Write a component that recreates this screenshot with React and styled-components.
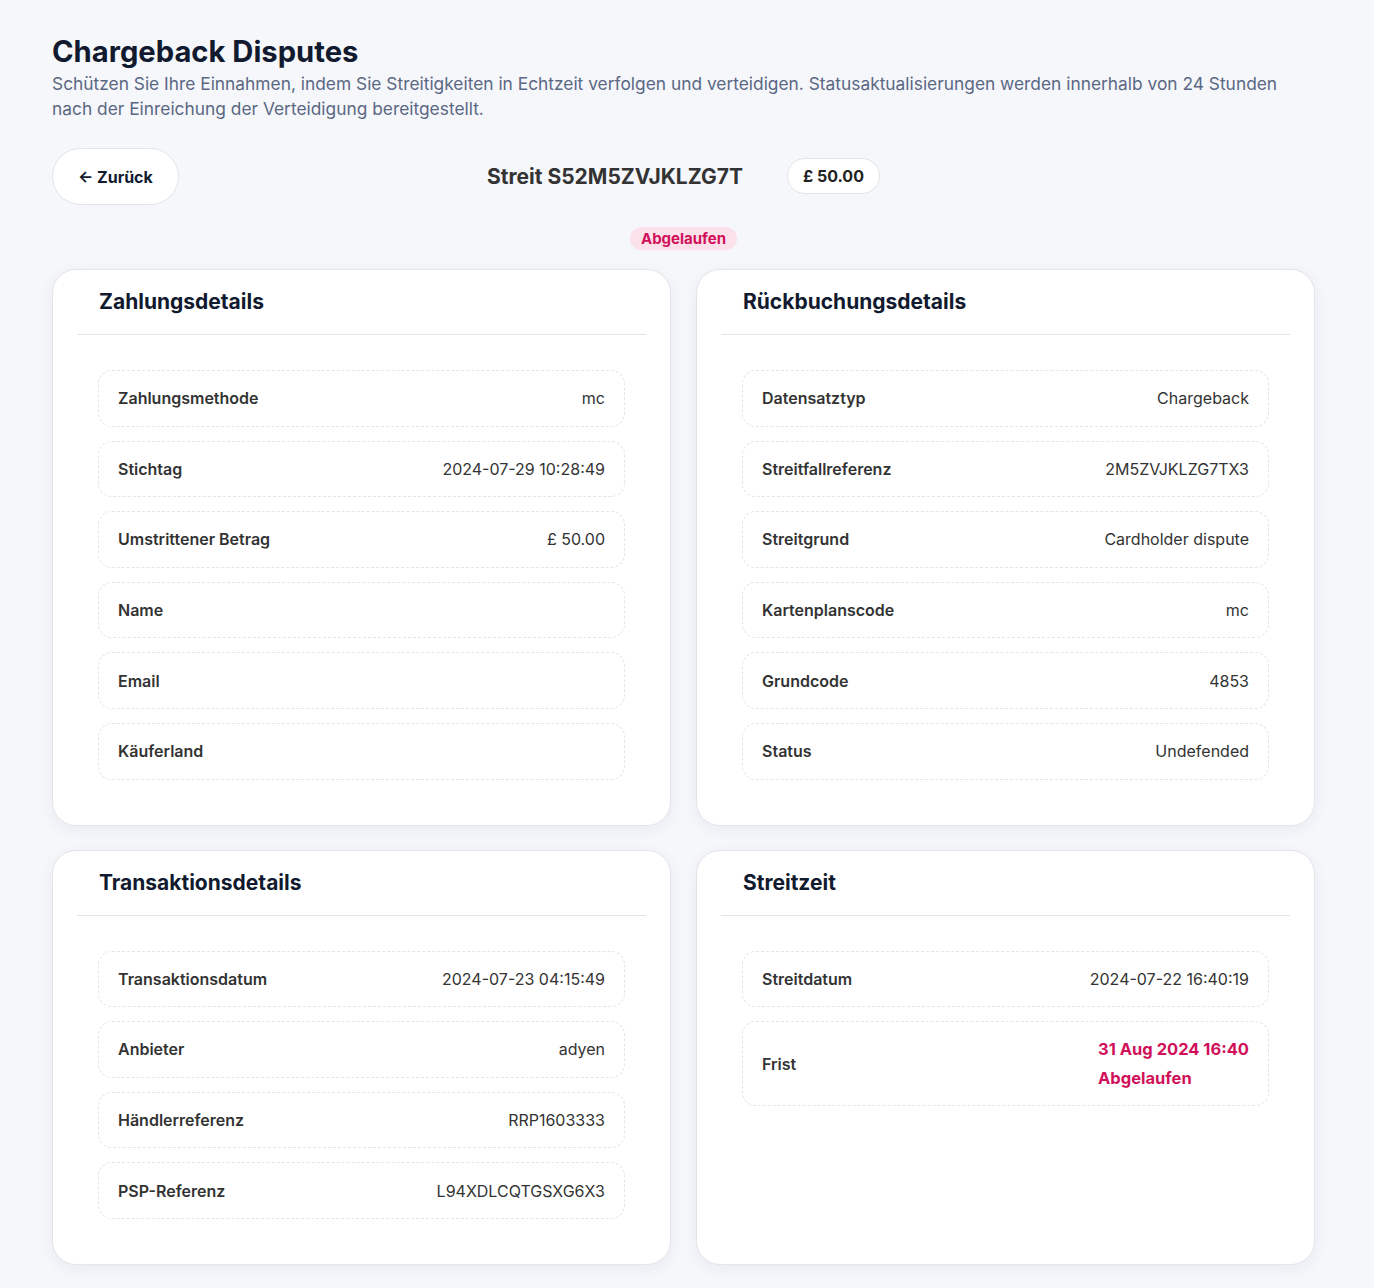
import styled, { createGlobalStyle } from 'styled-components'

const GlobalStyle = createGlobalStyle`
  body {
    margin: 0;
    background: #f6f7fb;
    font-family: Inter, "Noto Sans", sans-serif;
    color: #333;
  }
`

const Page = styled.div`
  padding: 34px 52px 22px;
  max-width: 1263px;
`

const Title = styled.h1`
  margin: 0;
  font-size: 29.2px;
  line-height: 36px;
  font-weight: 700;
  color: #111a2e;
`

const Subtitle = styled.p`
  margin: 1px 0 0;
  font-size: 17.35px;
  line-height: 25px;
  color: #5b6884;
`

const TopBar = styled.div`
  display: grid;
  grid-template-columns: 1fr auto 1fr;
  align-items: center;
  margin-top: 27px;
`

const BackButton = styled.button`
  justify-self: start;
  height: 57px;
  padding: 0 25px;
  border-radius: 999px;
  border: 1px solid #e1e4ea;
  background: #fff;
  font-family: inherit;
  font-size: 16px;
  font-weight: 700;
  color: #111a2e;
  cursor: pointer;
`

const Heading = styled.div`
  display: flex;
  align-items: center;
  gap: 44px;
  margin-top: -1px;
`

const DisputeId = styled.div`
  font-size: 21px;
  font-weight: 700;
  color: #333;
`

const AmountPill = styled.div`
  height: 34px;
  padding: 0 15px;
  display: flex;
  align-items: center;
  border-radius: 999px;
  border: 1px solid #e1e4ea;
  background: #fff;
  font-size: 16px;
  font-weight: 700;
  color: #222;
`

const BadgeRow = styled.div`
  display: flex;
  justify-content: center;
  margin-top: 22px;
`

const Badge = styled.span`
  display: inline-block;
  padding: 3px 11px;
  border-radius: 999px;
  background: #fbe1ea;
  color: #d1105a;
  font-size: 15px;
  line-height: 17px;
  font-weight: 700;
`

const Grid = styled.div`
  display: grid;
  grid-template-columns: 1fr 1fr;
  gap: 24px 25px;
  margin-top: 19px;
`

const Card = styled.section`
  background: #fff;
  border: 1px solid #e3e5ea;
  border-radius: 24px;
  box-shadow: 0 4px 16px rgba(20, 30, 60, 0.06);
  padding: 0 24px 45px;
`

const CardHeader = styled.h2`
  margin: 0;
  padding: 17px 22px 17px;
  font-size: 21px;
  line-height: 30px;
  font-weight: 700;
  color: #111a2e;
  border-bottom: 1px solid #e3e5ea;
`

const Rows = styled.div`
  display: flex;
  flex-direction: column;
  gap: 14px;
  padding: 35px 21px 0;
`

const Row = styled.div`
  display: flex;
  align-items: center;
  justify-content: space-between;
  min-height: 54.6px;
  padding: 0 19px;
  border: 1px dashed #e3e5ea;
  border-radius: 14px;
  font-size: 16px;
`

const Label = styled.span`
  font-weight: 600;
  color: #333;
`

const Value = styled.span`
  color: #333;
  text-align: right;
`

const Deadline = styled.div`
  display: flex;
  flex-direction: column;
  gap: 5px;
  padding: 15px 0;
  line-height: 24px;
  font-size: 16.5px;
  color: #d1105a;
  font-weight: 700;
`

const cards = [
  {
    title: 'Zahlungsdetails',
    rows: [
      ['Zahlungsmethode', 'mc'],
      ['Stichtag', '2024-07-29 10:28:49'],
      ['Umstrittener Betrag', '£ 50.00'],
      ['Name', ''],
      ['Email', ''],
      ['Käuferland', ''],
    ],
  },
  {
    title: 'Rückbuchungsdetails',
    rows: [
      ['Datensatztyp', 'Chargeback'],
      ['Streitfallreferenz', '2M5ZVJKLZG7TX3'],
      ['Streitgrund', 'Cardholder dispute'],
      ['Kartenplanscode', 'mc'],
      ['Grundcode', '4853'],
      ['Status', 'Undefended'],
    ],
  },
  {
    title: 'Transaktionsdetails',
    rows: [
      ['Transaktionsdatum', '2024-07-23 04:15:49'],
      ['Anbieter', 'adyen'],
      ['Händlerreferenz', 'RRP1603333'],
      ['PSP-Referenz', 'L94XDLCQTGSXG6X3'],
    ],
  },
]

const DetailCard = ({ title, rows, children }) => (
  <Card>
    <CardHeader>{title}</CardHeader>
    <Rows>
      {rows &&
        rows.map(([label, value]) => (
          <Row key={label}>
            <Label>{label}</Label>
            <Value>{value}</Value>
          </Row>
        ))}
      {children}
    </Rows>
  </Card>
)

export default function App() {
  return (
    <>
      <GlobalStyle />
      <Page>
        <Title>Chargeback Disputes</Title>
        <Subtitle>
          Schützen Sie Ihre Einnahmen, indem Sie Streitigkeiten in Echtzeit verfolgen und verteidigen.
          Statusaktualisierungen werden innerhalb von 24 Stunden nach der Einreichung der Verteidigung
          bereitgestellt.
        </Subtitle>

        <TopBar>
          <BackButton>← Zurück</BackButton>
          <Heading>
            <DisputeId>Streit S52M5ZVJKLZG7T</DisputeId>
            <AmountPill>£ 50.00</AmountPill>
          </Heading>
          <div />
        </TopBar>

        <BadgeRow>
          <Badge>Abgelaufen</Badge>
        </BadgeRow>

        <Grid>
          {cards.map((c) => (
            <DetailCard key={c.title} title={c.title} rows={c.rows} />
          ))}
          <DetailCard title="Streitzeit">
            <Row>
              <Label>Streitdatum</Label>
              <Value>2024-07-22 16:40:19</Value>
            </Row>
            <Row>
              <Label>Frist</Label>
              <Deadline>
                <span>31 Aug 2024 16:40</span>
                <span>Abgelaufen</span>
              </Deadline>
            </Row>
          </DetailCard>
        </Grid>
      </Page>
    </>
  )
}
